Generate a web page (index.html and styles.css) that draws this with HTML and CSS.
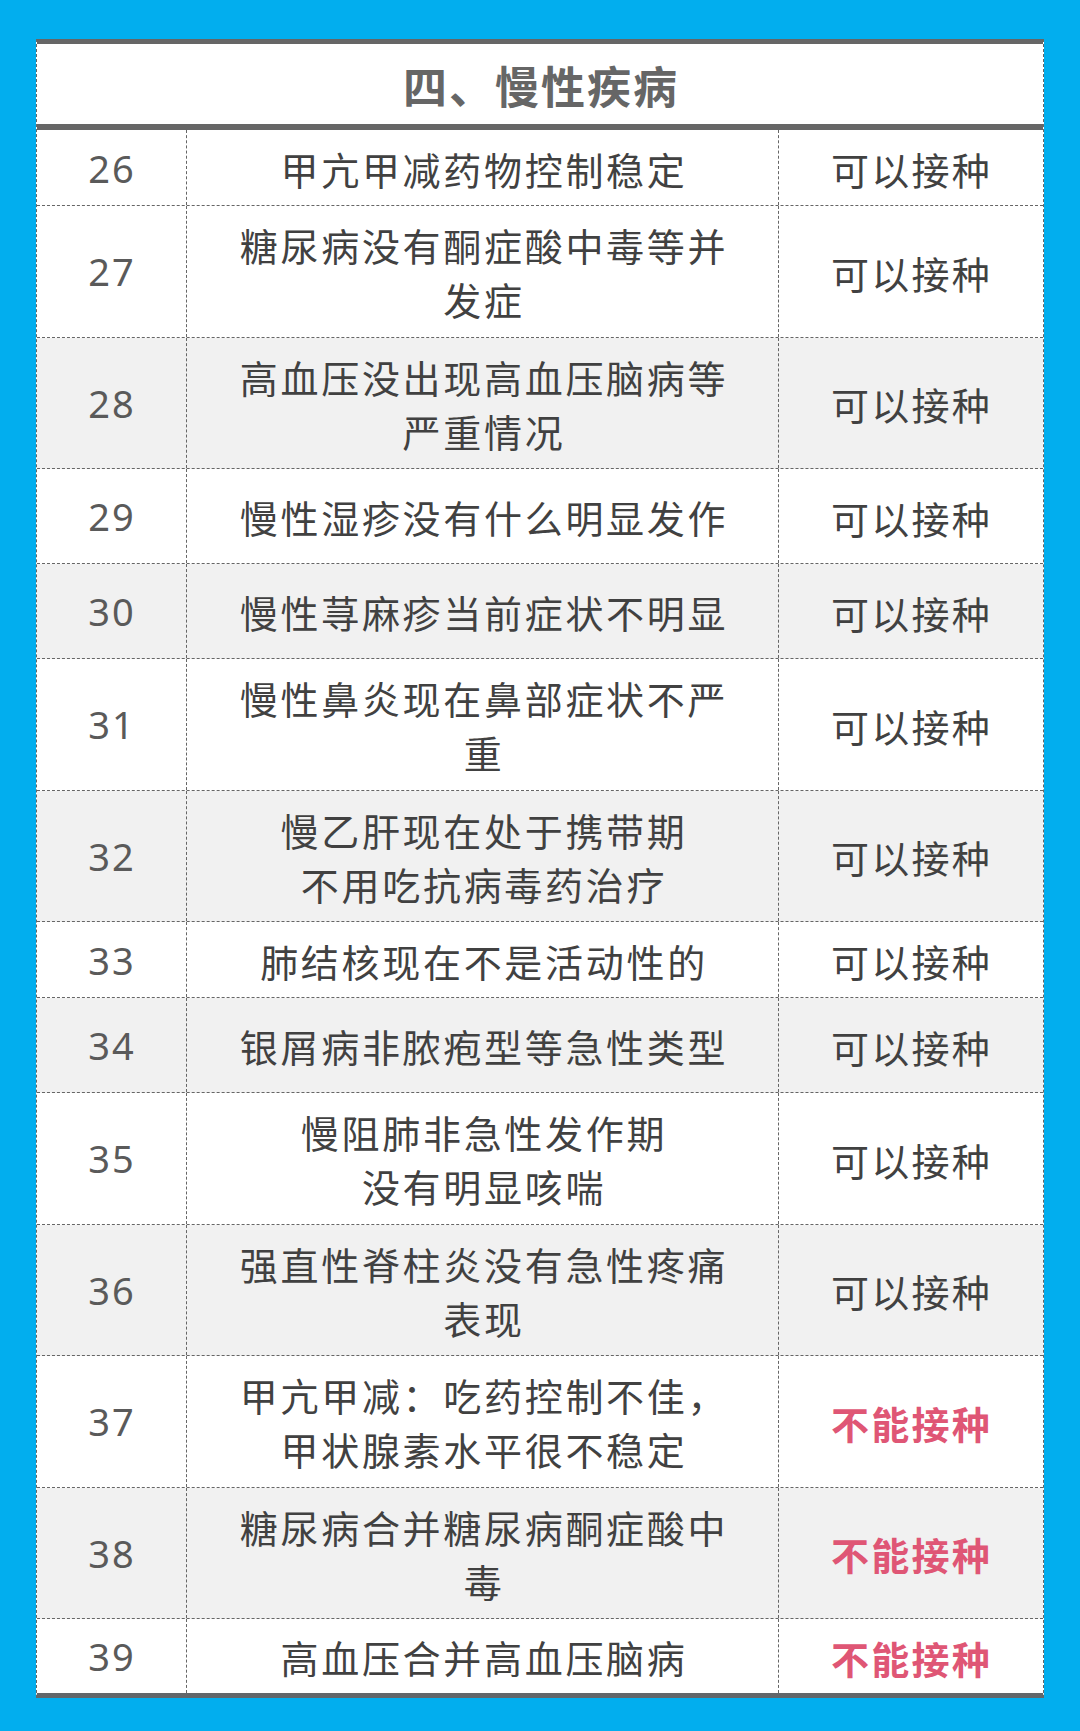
FILE: index.html
```html
<!DOCTYPE html>
<html lang="zh-CN">
<head>
<meta charset="utf-8">
<title>四、慢性疾病</title>
<link rel="stylesheet" href="styles.css">
</head>
<body>
<div class="table">
  <div class="head">四、慢性疾病</div>

  <div class="row short">
    <div class="c num">26</div>
    <div class="c desc">甲亢甲减药物控制稳定</div>
    <div class="c res">可以接种</div>
  </div>
  <div class="row tall">
    <div class="c num">27</div>
    <div class="c desc">糖尿病没有酮症酸中毒等并<br>发症</div>
    <div class="c res">可以接种</div>
  </div>
  <div class="row tall alt">
    <div class="c num">28</div>
    <div class="c desc">高血压没出现高血压脑病等<br>严重情况</div>
    <div class="c res">可以接种</div>
  </div>
  <div class="row mid">
    <div class="c num">29</div>
    <div class="c desc">慢性湿疹没有什么明显发作</div>
    <div class="c res">可以接种</div>
  </div>
  <div class="row mid alt">
    <div class="c num">30</div>
    <div class="c desc">慢性荨麻疹当前症状不明显</div>
    <div class="c res">可以接种</div>
  </div>
  <div class="row tall">
    <div class="c num">31</div>
    <div class="c desc">慢性鼻炎现在鼻部症状不严<br>重</div>
    <div class="c res">可以接种</div>
  </div>
  <div class="row tall alt">
    <div class="c num">32</div>
    <div class="c desc">慢乙肝现在处于携带期<br>不用吃抗病毒药治疗</div>
    <div class="c res">可以接种</div>
  </div>
  <div class="row short">
    <div class="c num">33</div>
    <div class="c desc">肺结核现在不是活动性的</div>
    <div class="c res">可以接种</div>
  </div>
  <div class="row mid alt">
    <div class="c num">34</div>
    <div class="c desc">银屑病非脓疱型等急性类型</div>
    <div class="c res">可以接种</div>
  </div>
  <div class="row tall">
    <div class="c num">35</div>
    <div class="c desc">慢阻肺非急性发作期<br>没有明显咳喘</div>
    <div class="c res">可以接种</div>
  </div>
  <div class="row tall alt">
    <div class="c num">36</div>
    <div class="c desc">强直性脊柱炎没有急性疼痛<br>表现</div>
    <div class="c res">可以接种</div>
  </div>
  <div class="row tall">
    <div class="c num">37</div>
    <div class="c desc">甲亢甲减：吃药控制不佳，<br>甲状腺素水平很不稳定</div>
    <div class="c res no">不能接种</div>
  </div>
  <div class="row tall alt">
    <div class="c num">38</div>
    <div class="c desc">糖尿病合并糖尿病酮症酸中<br>毒</div>
    <div class="c res no">不能接种</div>
  </div>
  <div class="row short last">
    <div class="c num">39</div>
    <div class="c desc">高血压合并高血压脑病</div>
    <div class="c res no">不能接种</div>
  </div>
</div>
</body>
</html>
```

FILE: styles.css
```css
* {
  box-sizing: border-box;
}

html, body {
  margin: 0;
  padding: 0;
}

body {
  background: #02aeee;
  padding: 39px 36px 33px 36px;
  font-family: "Noto Sans CJK SC", "Noto Sans", sans-serif;
  color: #414141;
}

.table {
  width: 1008px;
  background: #ffffff;
  border-top: 5px solid #666666;
  border-bottom: 5px solid #62666a;
  border-left: 1px dashed #666666;
  border-right: 1px dashed #666666;
}

.head {
  height: 86px;
  border-bottom: 6px solid #666666;
  display: flex;
  align-items: center;
  justify-content: center;
  padding-top: 2px;
  padding-left: 2px;
  font-size: 44px;
  font-weight: 700;
  letter-spacing: 2px;
  color: #666666;
}

.row {
  display: grid;
  grid-template-columns: 150px 592px 1fr;
  border-bottom: 1px dashed #666666;
  background: #ffffff;
}

.row.alt {
  background: #f1f1f1;
}

.row.last {
  border-bottom: none;
}

.row.short {
  height: 76px;
}

.row.last.short {
  height: 74px;
}

.row.mid {
  height: 95px;
}

.row.tall {
  height: 131.5px;
}

.c {
  display: flex;
  align-items: center;
  justify-content: center;
  text-align: center;
}

.num {
  border-right: 1px dashed #666666;
  font-family: "Noto Sans", "Open Sans", sans-serif;
  font-size: 38px;
  letter-spacing: 2px;
  padding-left: 1px;
  color: #5a5a5a;
}

.desc {
  border-right: 1px dashed #666666;
  font-size: 38px;
  line-height: 54px;
  letter-spacing: 2.7px;
  padding-left: 3px;
  padding-top: 2px;
}

.res {
  font-size: 38px;
  letter-spacing: 2.3px;
  padding-left: 1px;
  padding-top: 2px;
}

.res.no {
  color: #df5675;
  font-weight: 700;
}
```
